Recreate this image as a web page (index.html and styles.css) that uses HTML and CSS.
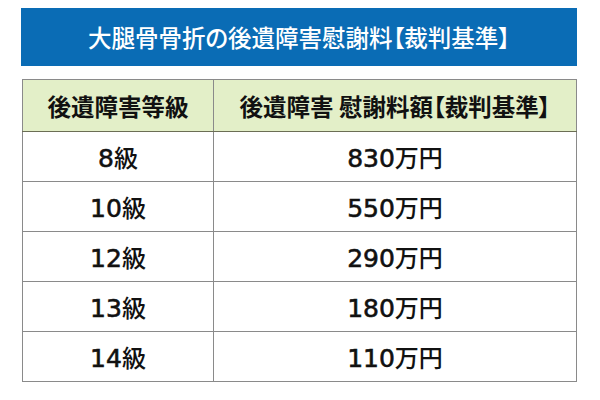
FILE: index.html
```html
<!DOCTYPE html>
<html lang="ja">
<head>
<meta charset="utf-8">
<link rel="stylesheet" href="styles.css">
</head>
<body>
<div class="page">
  <div class="banner">大腿骨骨折の後遺障害慰謝料【裁判基準】</div>
  <table class="tbl">
    <thead>
      <tr><th class="c1">後遺障害等級</th><th class="c2">後遺障害 慰謝料額【裁判基準】</th></tr>
    </thead>
    <tbody>
      <tr><td><span class="num">8</span>級</td><td><span class="num">830</span>万円</td></tr>
      <tr><td><span class="num">10</span>級</td><td><span class="num">550</span>万円</td></tr>
      <tr><td><span class="num">12</span>級</td><td><span class="num">290</span>万円</td></tr>
      <tr><td><span class="num">13</span>級</td><td><span class="num">180</span>万円</td></tr>
      <tr><td><span class="num">14</span>級</td><td><span class="num">110</span>万円</td></tr>
    </tbody>
  </table>
</div>
</body>
</html>
```
FILE: styles.css
```css
html, body {
  margin: 0;
  padding: 0;
  background: #ffffff;
}
body {
  font-family: "Noto Sans CJK JP", "Noto Sans", sans-serif;
  color: #111111;
}
.page {
  width: 600px;
  height: 400px;
  padding: 8px 23px 0 21px;
  box-sizing: border-box;
}
.banner {
  height: 58px;
  background: #0a6cb5;
  color: #ffffff;
  font-size: 23.5px;
  font-weight: 500;
  display: flex;
  align-items: center;
  justify-content: center;
  font-feature-settings: "palt";
}
.tbl {
  margin-top: 13px;
  margin-left: 1px;
  width: 555px;
  border-collapse: collapse;
  table-layout: fixed;
}
.tbl th, .tbl td {
  border: 1px solid #8a8a8a;
  text-align: center;
  padding: 0;
}
.tbl th {
  background: #e3efc8;
  height: 51px;
  font-size: 23.5px;
  font-weight: 700;
  border-bottom-color: #6b6e55;
  font-feature-settings: "palt";
}
.tbl th.c1 {
  width: 190px;
}
.tbl td {
  height: 49px;
  font-size: 24px;
  font-weight: 500;
}
.num {
  font-family: "DejaVu Sans", sans-serif;
  font-weight: 400;
  font-size: 25px;
  -webkit-text-stroke: 0.6px #111111;
}
```
